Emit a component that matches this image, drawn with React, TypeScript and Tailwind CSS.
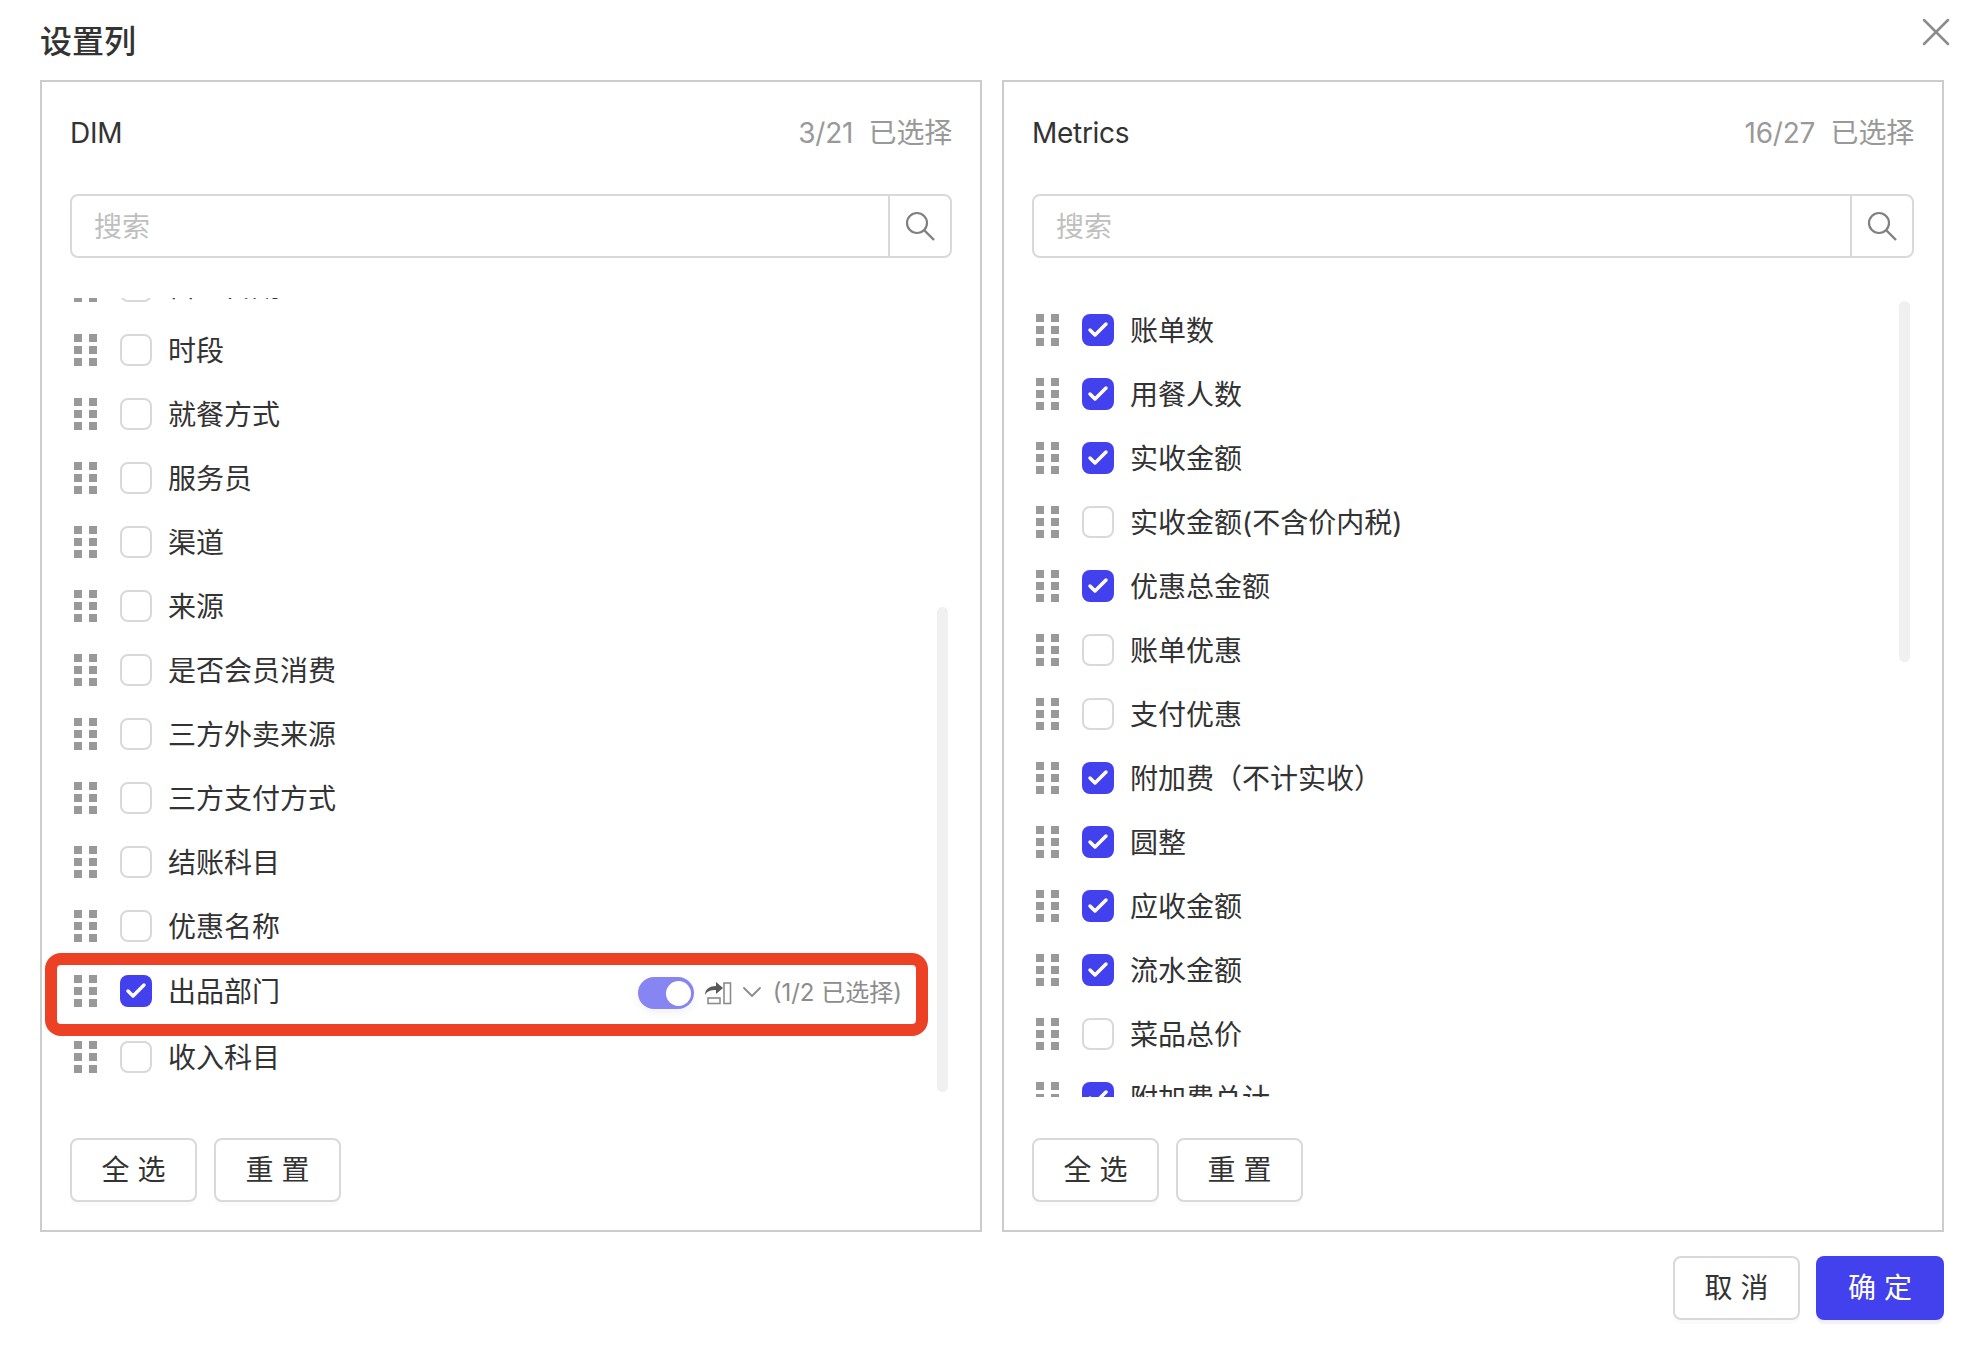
import { Check, X, ChevronDown } from "lucide-react";

const font = "font-['Inter','Noto_Sans_CJK_SC',sans-serif]";

const dimItems = [
  { label: "营业日期", checked: false },
  { label: "时段", checked: false },
  { label: "就餐方式", checked: false },
  { label: "服务员", checked: false },
  { label: "渠道", checked: false },
  { label: "来源", checked: false },
  { label: "是否会员消费", checked: false },
  { label: "三方外卖来源", checked: false },
  { label: "三方支付方式", checked: false },
  { label: "结账科目", checked: false },
  { label: "优惠名称", checked: false },
];

const metricItems = [
  { label: "账单数", checked: true },
  { label: "用餐人数", checked: true },
  { label: "实收金额", checked: true },
  { label: "实收金额(不含价内税)", checked: false },
  { label: "优惠总金额", checked: true },
  { label: "账单优惠", checked: false },
  { label: "支付优惠", checked: false },
  { label: "附加费（不计实收）", checked: true },
  { label: "圆整", checked: true },
  { label: "应收金额", checked: true },
  { label: "流水金额", checked: true },
  { label: "菜品总价", checked: false },
  { label: "附加费总计", checked: true },
];

const Grip = () => (
  <div className="grid grid-cols-[8px_8px] gap-x-[7px] gap-y-[4px] w-6 shrink-0 ml-1">
    {[0, 1, 2, 3, 4, 5].map((i) => (
      <span key={i} className="h-2 w-2 bg-[#999999]" />
    ))}
  </div>
);

const Checkbox = ({ checked }: { checked: boolean }) =>
  checked ? (
    <span className="ml-[22px] flex h-8 w-8 shrink-0 items-center justify-center rounded-lg bg-[#4340ed]">
      <Check size={24} strokeWidth={3.5} className="text-white" />
    </span>
  ) : (
    <span className="ml-[22px] h-8 w-8 shrink-0 rounded-lg border-2 border-[#d9d9d9] bg-white" />
  );

const Row = ({ label, checked }: { label: string; checked: boolean }) => (
  <div className="flex h-16 items-center">
    <Grip />
    <Checkbox checked={checked} />
    <span className="ml-4 pt-[2px] text-[28px] leading-10 text-[#333333]">{label}</span>
  </div>
);

const ColumnIcon = () => (
  <svg width="27" height="23" viewBox="0 0 27 23" fill="none" className="shrink-0">
    <rect x="19" y="1" width="6.5" height="20.5" stroke="#8c8c8c" strokeWidth="1.6" />
    <rect x="3" y="16" width="12" height="5.5" stroke="#8c8c8c" strokeWidth="1.6" />
    <path d="M0 13C0 7 5 4 11 4V0l7 6-7 6V8C6 8 2 9 0 13z" fill="#595959" />
  </svg>
);

const SearchIcon = () => (
  <svg width="30" height="30" viewBox="0 0 30 30" fill="none" className="shrink-0">
    <circle cx="12" cy="12" r="10" stroke="#808080" strokeWidth="2.2" />
    <path d="M19.5 19.5L29 29" stroke="#808080" strokeWidth="2.4" />
  </svg>
);

const HighlightRow = () => (
  <div className="relative mb-px flex h-[66px] items-center">
    <Grip />
    <Checkbox checked />
    <span className="ml-4 pt-[2px] text-[28px] leading-10 text-[#333333]">出品部门</span>
    <div className="ml-auto mr-[13px] flex items-center pt-1">
      <span className="flex h-8 w-14 items-center justify-end rounded-full bg-[#8685f2] pr-[3px] shadow-[0_4px_8px_rgba(0,0,0,0.06)]">
        <span className="h-[25px] w-[25px] rounded-full bg-white" />
      </span>
      <span className="ml-[11px] flex">
        <ColumnIcon />
      </span>
      <ChevronDown size={32} strokeWidth={1.4} className="ml-1 -mt-[3px] text-[#8c8c8c]" />
      <span className="ml-[5px] whitespace-nowrap text-2xl text-[#8c8c8c]">(1/2 已选择)</span>
    </div>
    <div className="pointer-events-none absolute -left-[25px] -right-[13px] -top-[5px] -bottom-[12px] rounded-2xl border-[12px] border-[#ec4124]" />
  </div>
);

const SearchBox = () => (
  <div className="flex h-16 items-stretch rounded-lg border-2 border-[#d9d9d9] bg-white">
    <span className="flex-1 pl-[22px] text-[28px] leading-[62px] text-[#bfbfbf]">搜索</span>
    <span className="flex w-[62px] items-center justify-center border-l-2 border-[#d9d9d9]">
      <SearchIcon />
    </span>
  </div>
);

const OutlineButton = ({ children }: { children: string }) => (
  <button className="h-16 w-[127px] rounded-lg border-2 border-[#d9d9d9] bg-white text-[28px] text-[#333333] shadow-[0_4px_0_rgba(0,0,0,0.015)]">
    {children}
  </button>
);

const Panel = ({
  title,
  count,
  track,
  children,
}: {
  title: string;
  count: string;
  track: string;
  children: React.ReactNode;
}) => (
  <section className="h-[1152px] w-[942px] border-2 border-[#cccccc] px-[28px]">
    <div className="flex h-[100px] items-center justify-between pt-[2px]">
      <span className="text-[28px] tracking-[-0.3px] text-[#333333]">{title}</span>
      <span className="text-[28px] tracking-[-0.2px] text-[#999999]">{count}&nbsp; 已选择</span>
    </div>
    <div className="mt-3">
      <SearchBox />
    </div>
    <div className="relative mt-10 flow-root h-[799px] overflow-y-clip">
      {children}
      <div className={track} />
    </div>
    <div className="mt-[41px] flex gap-[17px]">
      <OutlineButton>全 选</OutlineButton>
      <OutlineButton>重 置</OutlineButton>
    </div>
  </section>
);

export default function App() {
  return (
    <div className={`${font} relative h-[1348px] w-[1972px] bg-white pl-10`}>
      <h1 className="flex h-20 items-center pt-[3px] text-[32px] font-medium text-[#333333]">设置列</h1>
      <X size={48} strokeWidth={1.25} className="absolute left-[1912px] top-2 text-[#8c8c8c]" />

      <div className="flex gap-5">
        <Panel
          title="DIM"
          count="3/21"
          track="absolute right-1 top-[309px] h-[485px] w-[11px] rounded-full bg-[#f0f0f0]"
        >
          <div className="-mt-[44px] w-[845px]">
            {dimItems.map((item) => (
              <Row key={item.label} label={item.label} checked={item.checked} />
            ))}
            <HighlightRow />
            <Row label="收入科目" checked={false} />
          </div>
        </Panel>
        <Panel
          title="Metrics"
          count="16/27"
          track="absolute right-1 top-[3px] h-[361px] w-[11px] rounded-full bg-[#f0f0f0]"
        >
          <div>
            {metricItems.map((item) => (
              <Row key={item.label} label={item.label} checked={item.checked} />
            ))}
          </div>
        </Panel>
      </div>

      <div className="mt-6 flex w-[1904px] justify-end gap-4">
        <OutlineButton>取 消</OutlineButton>
        <button className="h-16 w-[128px] rounded-lg bg-[#4340ed] text-[28px] text-white shadow-[0_4px_0_rgba(67,64,237,0.08)]">
          确 定
        </button>
      </div>
    </div>
  );
}
